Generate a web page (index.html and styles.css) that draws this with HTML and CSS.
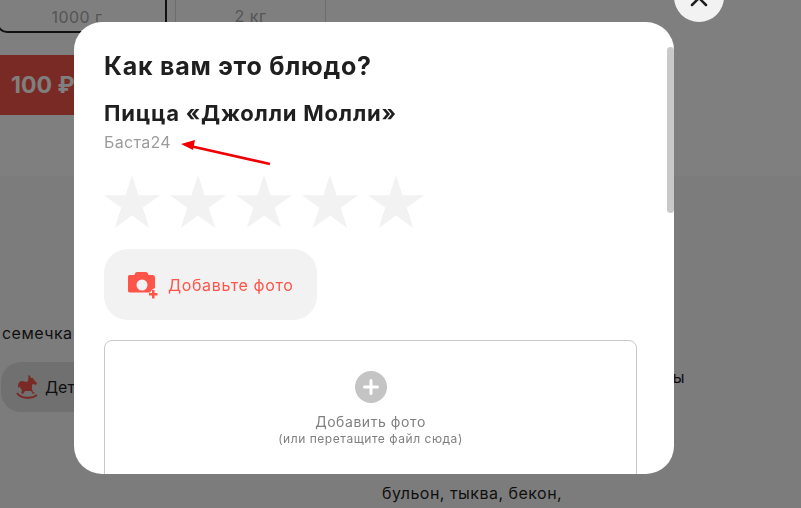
FILE: index.html
```html
<!DOCTYPE html>
<html lang="ru">

<head>
  <meta charset="UTF-8" />
  <meta name="viewport" content="width=device-width, initial-scale=1.0" />
  <title>Как вам это блюдо?</title>
  <link rel="stylesheet" href="styles.css">
</head>

<body>

  <main class="page">
    <section class="product">
      <div class="sizes">
        <div class="size size-active">1000 г</div>
        <div class="size">2 кг</div>
      </div>
      <button class="buy" type="button">100 ₽</button>
    </section>

    <section class="details">
      <div class="details-left">
        <p class="line">семечка</p>
        <div class="chip">
          <svg class="chip-icon" viewBox="0 0 22 24" width="22" height="24">
            <path d="M14 1l1 2 2 0 1 2 3 3-1 2-3-1-1 1 0 4 1 3 2 1-2 1-2-3-6 0-2 3-2-1 1-3c-1-1-2-2-2-4l-1 2-1-1c0-3 1-6 4-6 2 0 3 1 5 1 1 0 2-4 1-7z" />
            <path class="chip-rocker" d="M1 18c4 6 15 6 20 2" />
          </svg>
          <span>Детское</span>
        </div>
      </div>
      <div class="details-right">
        <p class="line line-end">ы</p>
        <p class="line">бульон, тыква, бекон,</p>
      </div>
    </section>
  </main>

  <div class="overlay"></div>

  <div class="modal">
    <h2 class="modal-title">Как вам это блюдо?</h2>
    <h3 class="dish">Пицца «Джолли Молли»</h3>
    <p class="place">Баста24</p>

    <div class="stars">
      <svg class="star" viewBox="0 0 56 53"><polygon points="28,0 34.6,20.2 56,20.2 38.7,32.8 45.3,53 28,40.5 10.7,53 17.3,32.8 0,20.2 21.4,20.2" /></svg>
      <svg class="star" viewBox="0 0 56 53"><polygon points="28,0 34.6,20.2 56,20.2 38.7,32.8 45.3,53 28,40.5 10.7,53 17.3,32.8 0,20.2 21.4,20.2" /></svg>
      <svg class="star" viewBox="0 0 56 53"><polygon points="28,0 34.6,20.2 56,20.2 38.7,32.8 45.3,53 28,40.5 10.7,53 17.3,32.8 0,20.2 21.4,20.2" /></svg>
      <svg class="star" viewBox="0 0 56 53"><polygon points="28,0 34.6,20.2 56,20.2 38.7,32.8 45.3,53 28,40.5 10.7,53 17.3,32.8 0,20.2 21.4,20.2" /></svg>
      <svg class="star" viewBox="0 0 56 53"><polygon points="28,0 34.6,20.2 56,20.2 38.7,32.8 45.3,53 28,40.5 10.7,53 17.3,32.8 0,20.2 21.4,20.2" /></svg>
    </div>

    <button class="add-photo" type="button">
      <svg class="camera" viewBox="0 0 31 27" width="31" height="27">
        <path d="M9 0h9c1 0 2 1 2.500 3h4c1.500 0 2.500 1 2.500 2.500v10.500a8 8 0 0 0-5 4.500h-20c-1.500 0-2.500-1-2.500-2.500v-12.500c0-1.500 1-2.500 2.500-2.500h4.500c.5-2 1-3 2.500-3z" />
        <circle class="camera-lens" cx="14" cy="13" r="5.500" />
        <path d="M24 18h2.500v3h3v2.500h-3v3h-2.500v-3h-3v-2.500h3z" />
      </svg>
      <span>Добавьте фото</span>
    </button>

    <div class="dropzone">
      <svg class="plus" viewBox="0 0 32 32" width="32" height="32">
        <circle cx="16" cy="16" r="16" />
        <path d="M16 9.500v13M9.500 16h13" />
      </svg>
      <span class="drop-title">Добавить фото</span>
      <span class="drop-hint">(или перетащите файл сюда)</span>
    </div>

    <div class="scrollbar"></div>
  </div>

  <button class="close" type="button" aria-label="Закрыть">
    <svg viewBox="0 0 20 20" width="20" height="20">
      <path d="M3 3l14 14M17 3L3 17" />
    </svg>
  </button>

  <svg class="arrow" viewBox="0 0 100 30" width="100" height="30">
    <path class="arrow-line" d="M90 25L10 7" />
    <polygon points="1,5 15,1 13,11" />
  </svg>

</body>

</html>
```

FILE: styles.css
```css
* {
  box-sizing: border-box;
  margin: 0;
  padding: 0;
}
:root {
  --red: #ff5449;
  --soft: #f2f2f2;
  --ink: #1f1f1f;
}
html,
body {
  height: 100%;
  overflow: hidden;
}
body {
  background: #fff;
  color: var(--ink);
  font: 16px/1.25 Inter, "Noto Sans", sans-serif;
}
button {
  border: 0;
  font: inherit;
}

/* Page behind the modal */
.page {
  height: 100%;
  display: flex;
  flex-direction: column;
}
.product {
  height: 176px;
}
.sizes {
  display: flex;
  gap: 8px;
  height: 52px;
  margin: -19px 0 0 -3px;
}
.size {
  width: 151px;
  border: 1px solid #d8d8d8;
  border-radius: 10px;
  padding-top: 24px;
  text-align: center;
  font-size: 16px;
  color: #aaa;
  letter-spacing: 0.03em;
}
.size-active {
  width: 170px;
  padding-right: 10px;
  border: 2px solid #222;
}
.buy {
  display: block;
  margin: 22px 0 0 -20px;
  width: 180px;
  height: 60px;
  border-radius: 12px;
  background: #f5544a;
  color: #fff;
  font-weight: 700;
  font-size: 23px;
  text-align: left;
  padding-left: 31px;
}
.details {
  flex: 1;
  background: #f8f8f8;
  display: grid;
  grid-template-columns: 382px 303px;
  padding-top: 147px;
}
.details-left {
  padding-left: 2px;
}
.line {
  white-space: nowrap;
  letter-spacing: 0.03em;
}
.chip {
  display: flex;
  align-items: center;
  gap: 7px;
  margin: 19px 0 0 -1px;
  width: 200px;
  height: 50px;
  padding-left: 15px;
  border-radius: 20px;
  background: #e0e0e0;
}
.chip-icon {
  flex-shrink: 0;
  fill: #f5544a;
}
.chip-rocker {
  fill: none;
  stroke: #f5544a;
  stroke-width: 2;
}
.details-right {
  display: flex;
  flex-direction: column;
  padding-top: 44px;
  gap: 96px;
}
.line-end {
  text-align: right;
}
.overlay {
  position: fixed;
  inset: 0;
  background: rgba(0, 0, 0, 0.5);
}

/* Modal */
.modal {
  position: fixed;
  top: 22px;
  left: 74px;
  width: 600px;
  height: 452px;
  overflow: hidden;
  padding: 28px 37px 0 30px;
  border-radius: 28px;
  background: #fff;
}
.modal-title {
  font-size: 25px;
  line-height: 32px;
  font-weight: 700;
  letter-spacing: 0.03em;
}
.dish {
  margin-top: 17px;
  font-size: 22px;
  line-height: 28px;
  font-weight: 700;
  letter-spacing: 0.036em;
}
.place {
  margin-top: 5px;
  font-size: 16px;
  line-height: 20px;
  letter-spacing: 0.02em;
  color: #9b9b9b;
}
.stars {
  display: flex;
  gap: 10px;
  margin-top: 23px;
}
.star {
  width: 56px;
  height: 53px;
  fill: var(--soft);
}
.add-photo {
  display: flex;
  align-items: center;
  gap: 9px;
  width: 213px;
  height: 71px;
  margin-top: 21px;
  padding-left: 24px;
  border-radius: 24px;
  background: var(--soft);
  color: var(--red);
  letter-spacing: 0.04em;
}
.camera {
  margin-top: 2px;
  fill: var(--red);
}
.camera-lens {
  fill: var(--soft);
}
.dropzone {
  display: flex;
  flex-direction: column;
  align-items: center;
  height: 160px;
  margin-top: 20px;
  padding-top: 30px;
  border: 1px solid #c8c8c8;
  border-radius: 8px;
  color: #808080;
}
.plus {
  margin-bottom: 10px;
  fill: #c4c4c4;
}
.plus path {
  fill: none;
  stroke: #fff;
  stroke-width: 3;
  stroke-linecap: round;
}
.drop-title {
  font-size: 14px;
  line-height: 18px;
  letter-spacing: 0.04em;
}
.drop-hint {
  font-size: 12px;
  line-height: 16px;
  letter-spacing: 0.045em;
}
.scrollbar {
  position: absolute;
  top: 25px;
  right: 0;
  width: 7px;
  height: 166px;
  border-radius: 4px;
  background: #c9c9c9;
}
.close {
  position: fixed;
  top: -28px;
  left: 674px;
  width: 50px;
  height: 50px;
  padding-top: 6px;
  border-radius: 50%;
  background: var(--soft);
}
.close path {
  fill: none;
  stroke: #1f1f1f;
  stroke-width: 2.500;
  stroke-linecap: round;
}
.arrow {
  position: fixed;
  top: 139px;
  left: 180px;
  fill: #f00000;
}
.arrow-line {
  stroke: #f00000;
  stroke-width: 2.500;
}
```
